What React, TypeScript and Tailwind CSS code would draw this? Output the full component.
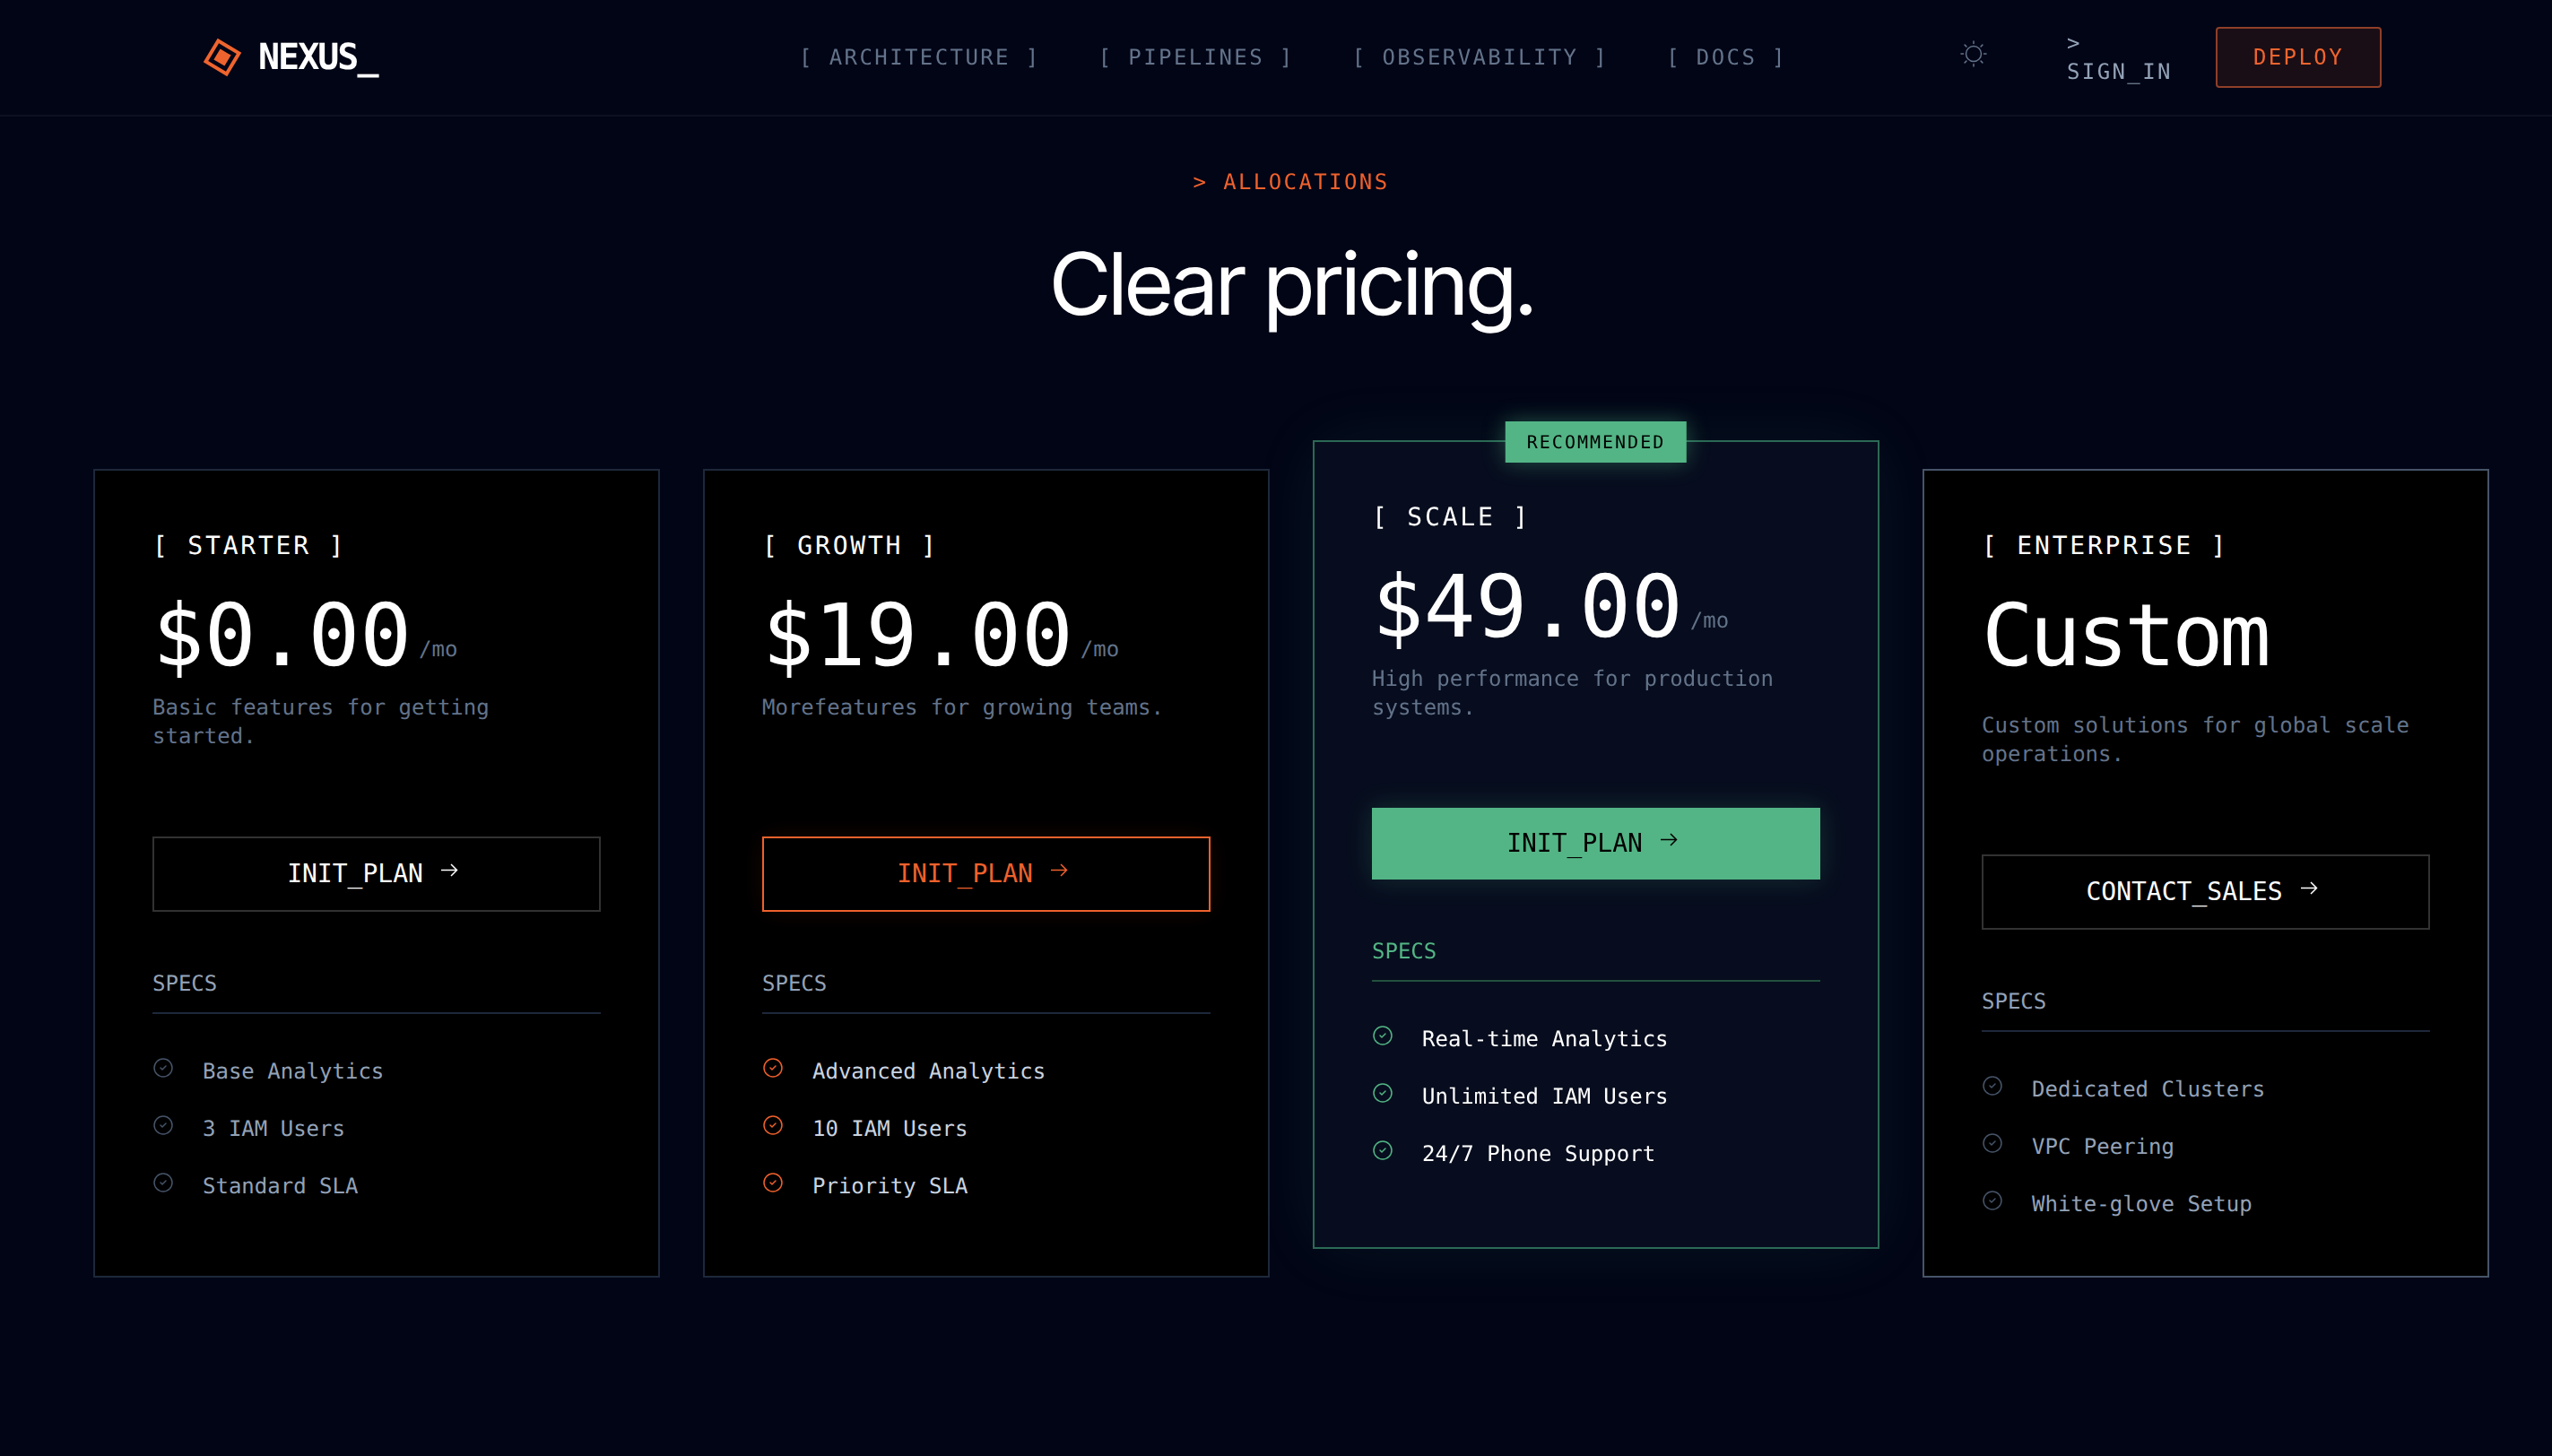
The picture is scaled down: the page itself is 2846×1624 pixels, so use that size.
import { CircleCheck } from 'lucide-react'

const mono = "font-['DejaVu_Sans_Mono',monospace]"

const plans = [
  {
    name: 'STARTER',
    price: '$0.00',
    desc: 'Basic features for getting started.',
    cta: 'INIT_PLAN',
    features: ['Base Analytics', '3 IAM Users', 'Standard SLA'],
    card: 'border-[#1e293b] bg-black',
    button: 'border-2 border-[#333333] text-white',
    specs: 'text-[#94a3b8]',
    rule: 'border-[#1e293b]',
    icon: 'text-[#475569]',
    item: 'text-[#94a3b8]',
  },
  {
    name: 'GROWTH',
    price: '$19.00',
    desc: 'Morefeatures for growing teams.',
    cta: 'INIT_PLAN',
    features: ['Advanced Analytics', '10 IAM Users', 'Priority SLA'],
    card: 'border-[#1e293b] bg-black',
    button: 'border-2 border-[#f0622d] text-[#f0622d] shadow-[0_0_30px_rgba(240,98,45,0.1)]',
    specs: 'text-[#94a3b8]',
    rule: 'border-[#1e293b]',
    icon: 'text-[#f0622d]',
    item: 'text-[#cbd5e1]',
  },
  {
    name: 'SCALE',
    price: '$49.00',
    desc: 'High performance for production systems.',
    cta: 'INIT_PLAN',
    features: ['Real-time Analytics', 'Unlimited IAM Users', '24/7 Phone Support'],
    card: 'border-[#2c6a56] bg-[#080e1f] -translate-y-8 shadow-[0_0_80px_rgba(82,183,136,0.1)]',
    button: 'bg-[#54b686] text-black shadow-[0_0_30px_rgba(82,183,136,0.2)]',
    specs: 'text-[#54b686]',
    rule: 'border-[#23513f]',
    icon: 'text-[#54b686]',
    item: 'text-white',
    featured: true,
  },
  {
    name: 'ENTERPRISE',
    price: 'Custom',
    desc: 'Custom solutions for global scale operations.',
    cta: 'CONTACT_SALES',
    features: ['Dedicated Clusters', 'VPC Peering', 'White-glove Setup'],
    card: 'border-[#475569] bg-black',
    button: 'border-2 border-[#333333] text-white',
    specs: 'text-[#94a3b8]',
    rule: 'border-[#1e293b]',
    icon: 'text-[#475569]',
    item: 'text-[#94a3b8]',
    custom: true,
  },
]

type Plan = (typeof plans)[number]

const ArrowIcon = () => (
  <svg viewBox="0 0 32 32" className="h-8 w-8" fill="none" stroke="currentColor" strokeWidth="1.5">
    <path d="M4 11.5h17M15 5l6.5 6.5L15 18" />
  </svg>
)

const SunIcon = () => (
  <svg viewBox="0 0 32 32" className="mb-2 h-8 w-8 text-[#64748b]" fill="none" stroke="currentColor" strokeWidth="1.5" strokeLinecap="round">
    <circle cx="16" cy="16" r="8.5" />
    <path d="M16 2v2.5M16 27.5V30M2 16h2.5M27.5 16H30M6.1 6.1l1.8 1.8M24.1 24.1l1.8 1.8M6.1 25.9l1.8-1.8M24.1 7.9l1.8-1.8" />
  </svg>
)

const PlanCard = ({ plan }: { plan: Plan }) => (
  <div className={`relative border-2 p-16 ${plan.card}`}>
    {plan.featured && (
      <div className="absolute top-0 left-1/2 -translate-x-1/2 -translate-y-1/2 bg-[#54b686] px-6 py-2 text-[20px] leading-[30px] tracking-[0.1em] text-black shadow-[0_0_24px_rgba(82,183,136,0.4)]">
        RECOMMENDED
      </div>
    )}
    <div className="mb-8 text-[28px] leading-10 tracking-[0.1em] text-white">[ {plan.name} ]</div>
    {plan.custom ? (
      <div className="mb-4 h-[116px] text-[96px] leading-[96px] tracking-[-0.05em] text-white">{plan.price}</div>
    ) : (
      <div className="mb-4 flex items-baseline gap-2">
        <span className="text-[96px] leading-[96px] text-white">{plan.price}</span>
        <span className="-translate-y-2.5 text-[24px] leading-8 text-[#64748b]">/mo</span>
      </div>
    )}
    <p className="mb-16 h-24 text-[24px] leading-8 text-[#64748b]">{plan.desc}</p>
    <button className={`mb-16 flex w-full items-center justify-center gap-4 py-5 text-[28px] leading-10 ${plan.button}`}>
      {plan.cta}
      <ArrowIcon />
    </button>
    <div className={`mb-12 border-b-2 pb-4 text-[24px] leading-8 ${plan.specs} ${plan.rule}`}>SPECS</div>
    <ul className="flex flex-col gap-8">
      {plan.features.map((f) => (
        <li key={f} className={`flex items-start gap-8 text-[24px] leading-8 ${plan.item}`}>
          <CircleCheck className={`h-6 w-6 shrink-0 ${plan.icon}`} strokeWidth={1.5} />
          {f}
        </li>
      ))}
    </ul>
  </div>
)

export default function App() {
  return (
    <div className={`h-[1624px] w-[2846px] overflow-hidden bg-[#020516] [text-rendering:geometricPrecision] ${mono}`}>
      <div className="w-[2880px] opacity-[0.999]">
        {/* Nav */}
        <nav className="grid h-[130px] grid-cols-[1fr_auto_1fr] items-center border-b-2 border-[#0d1222] px-[224px]">
          <div className="flex items-center gap-4">
            <svg viewBox="0 0 48 48" className="h-12 w-12">
              <rect x="10.5" y="10.5" width="27" height="27" fill="none" stroke="#f0652f" strokeWidth="4" transform="rotate(31 24 24)" />
              <rect x="17" y="17" width="14" height="14" fill="#f0652f" transform="rotate(31 24 24)" />
            </svg>
            <span className="text-[40px] font-bold tracking-[-0.05em] text-white">NEXUS_</span>
          </div>
          <div className="flex items-center gap-16 pl-1 text-[24px] leading-8 tracking-[0.1em] text-[#64748b]">
            <a>[ ARCHITECTURE ]</a>
            <a>[ PIPELINES ]</a>
            <a>[ OBSERVABILITY ]</a>
            <a>[ DOCS ]</a>
          </div>
          <div className="flex items-center justify-end">
            <SunIcon />
            <div className="mr-12 ml-[88px] text-[24px] leading-8 tracking-[0.1em] text-[#94a3b8]">
              <div>&gt;</div>
              <div>SIGN_IN</div>
            </div>
            <button className="rounded-[4px] border-2 border-[#8f4029] bg-[#1b0f17] px-10 py-4 text-[24px] leading-8 tracking-[0.1em] text-[#f0652f]">
              DEPLOY
            </button>
          </div>
        </nav>

        {/* Pricing */}
        <section className="px-[104px] pt-[57px]">
          <div className="mb-[50px] text-center text-[24px] leading-8 tracking-[0.1em] text-[#f0622d]">&gt; ALLOCATIONS</div>
          <h1 className="mb-[158px] text-center font-['Inter',sans-serif] text-[96px] leading-[96px] font-normal tracking-[-0.05em] text-white">
            Clear pricing.
          </h1>
          <div className="grid grid-cols-4 gap-12">
            {plans.map((p) => (
              <PlanCard key={p.name} plan={p} />
            ))}
          </div>
        </section>
      </div>
    </div>
  )
}
